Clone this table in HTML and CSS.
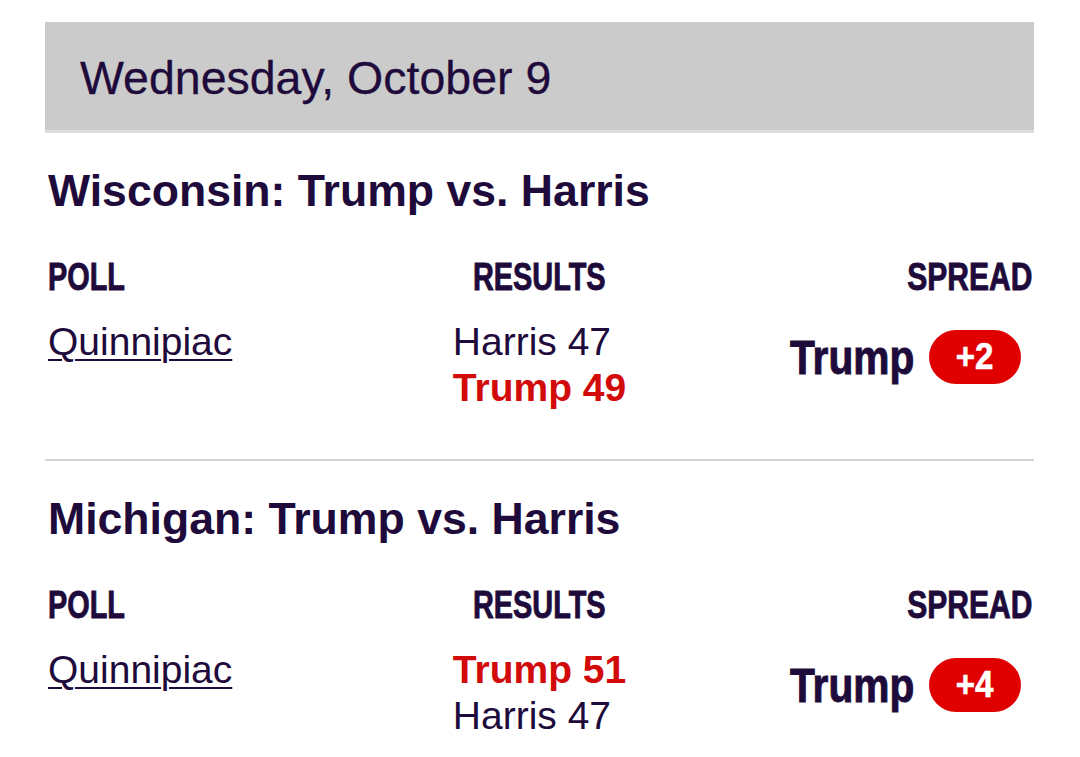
FILE: index.html
```html
<!DOCTYPE html>
<html lang="en">
<head>
<meta charset="utf-8">
<title>Polls</title>
<link rel="stylesheet" href="styles.css">
</head>
<body>
  <div class="date-bar">Wednesday, October 9</div>

  <section class="race">
    <h2 class="race-title">Wisconsin: Trump vs. Harris</h2>
    <div class="grid head">
      <div class="c-poll"><span class="cond">POLL</span></div>
      <div class="c-results"><span class="cond">RESULTS</span></div>
      <div class="c-spread"><span class="cond">SPREAD</span></div>
    </div>
    <div class="grid row">
      <div class="c-poll"><a href="#" class="poll-link">Quinnipiac</a></div>
      <div class="c-results">
        <div class="res">Harris 47</div>
        <div class="res win">Trump 49</div>
      </div>
      <div class="c-spread">
        <span class="spread-name">Trump</span>
        <span class="badge"><span class="badge-num">+2</span></span>
      </div>
    </div>
  </section>

  <section class="race">
    <h2 class="race-title">Michigan: Trump vs. Harris</h2>
    <div class="grid head">
      <div class="c-poll"><span class="cond">POLL</span></div>
      <div class="c-results"><span class="cond">RESULTS</span></div>
      <div class="c-spread"><span class="cond">SPREAD</span></div>
    </div>
    <div class="grid row">
      <div class="c-poll"><a href="#" class="poll-link">Quinnipiac</a></div>
      <div class="c-results">
        <div class="res win">Trump 51</div>
        <div class="res">Harris 47</div>
      </div>
      <div class="c-spread">
        <span class="spread-name">Trump</span>
        <span class="badge"><span class="badge-num">+4</span></span>
      </div>
    </div>
  </section>
</body>
</html>
```
FILE: styles.css
```css
html, body {
  background: #ffffff;
}

body {
  margin: 0;
  padding: 22px 46px 0 45px;
  font-family: "Liberation Sans", Arial, sans-serif;
  color: #1e0b3b;
}

.date-bar {
  display: flex;
  align-items: center;
  box-sizing: border-box;
  height: 111px;
  padding: 3px 0 0 35px;
  background: #cbcbcb;
  border-bottom: 3px solid #dcdcdc;
  font-size: 46.5px;
  -webkit-text-stroke: 0.3px #1e0b3b;
}

.race {
  padding-bottom: 48px;
}

.race + .race {
  border-top: 2px solid #d4d4d4;
}

.race-title {
  margin: 32px 0 0 3px;
  font-size: 44.6px;
  line-height: 52px;
  font-weight: bold;
}

.grid {
  display: grid;
  grid-template-columns: 1fr 1fr 1fr;
}

.head {
  margin-top: 40px;
  font-weight: bold;
  font-size: 38px;
  line-height: 40px;
}

.cond {
  display: inline-block;
  transform: scaleX(0.76);
  -webkit-text-stroke: 0.9px #1e0b3b;
}

.head .c-poll {
  padding-left: 3px;
}

.head .c-poll .cond {
  transform-origin: left center;
}

.head .c-results {
  text-align: center;
}

.head .c-results .cond {
  transform-origin: center center;
}

.head .c-spread {
  text-align: right;
  padding-right: 2px;
}

.head .c-spread .cond {
  transform-origin: right center;
  transform: scaleX(0.79);
}

.row {
  margin-top: 22px;
  font-size: 39px;
  line-height: 46px;
}

.row .c-poll {
  padding-left: 3px;
}

.poll-link {
  color: #1e0b3b;
  text-decoration: underline;
  text-decoration-thickness: 2px;
  text-underline-offset: 4px;
}

.row .c-results {
  justify-self: center;
  text-align: left;
}

.res.win {
  color: #d20a0a;
  font-weight: bold;
}

.row .c-spread {
  display: flex;
  justify-content: flex-end;
  align-items: center;
  align-self: start;
  gap: 12px;
  padding-top: 11px;
  padding-right: 13px;
}

.spread-name {
  display: inline-block;
  font-weight: bold;
  font-size: 49px;
  line-height: 54px;
  width: 127px;
  white-space: nowrap;
  transform: scaleX(0.83);
  transform-origin: left center;
  -webkit-text-stroke: 1px #1e0b3b;
}

.badge {
  display: flex;
  align-items: center;
  justify-content: center;
  width: 92px;
  height: 54px;
  border-radius: 27px;
  background: #e00000;
  color: #ffffff;
  font-weight: bold;
  font-size: 36px;
}

.badge-num {
  display: inline-block;
  transform: scaleX(0.92);
  -webkit-text-stroke: 0.6px #ffffff;
}
```
